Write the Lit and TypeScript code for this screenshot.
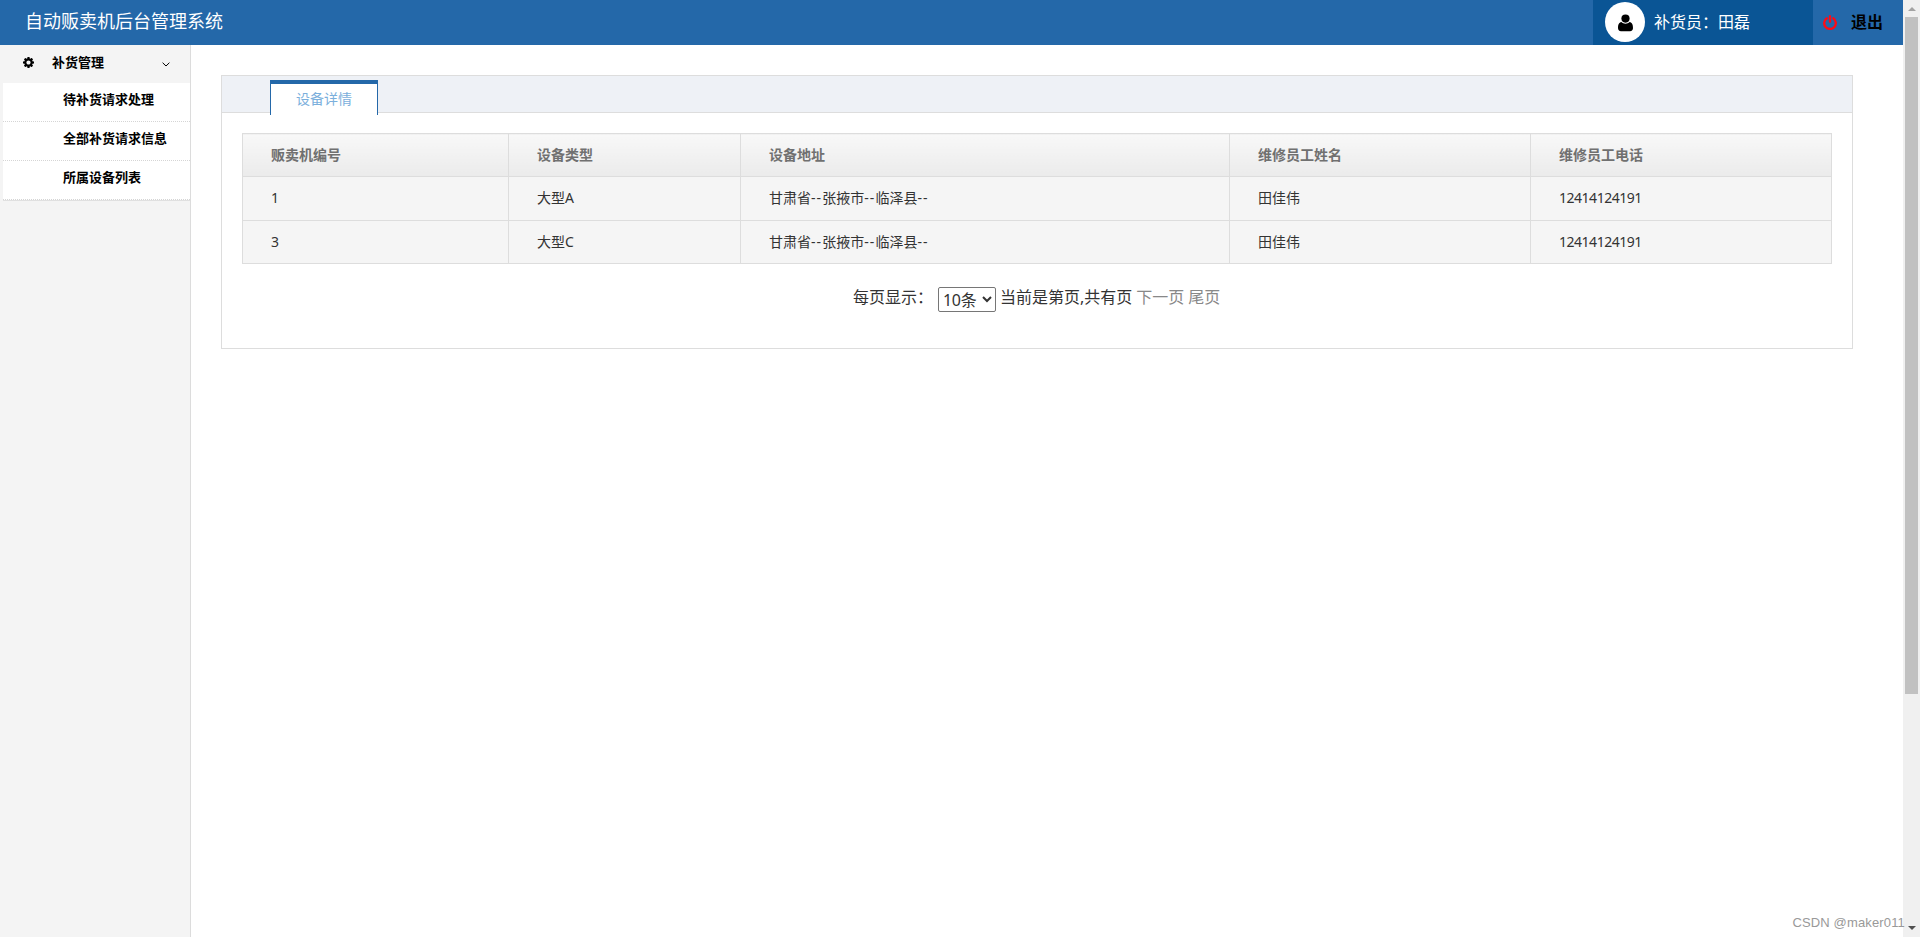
import { LitElement, html, css, svg } from "lit";
import { customElement, state } from "lit/decorators.js";

interface Device {
  id: string;
  type: string;
  address: string[];
  staff: string;
  phone: string;
}

const gear = svg`<svg class="gear" viewBox="0 0 1536 1536"><path fill="currentColor" d="M1060 768q0-121-85.500-206.500T768 476t-206.500 85.500T476 768t85.500 206.500T768 1060t206.500-85.500T1060 768zm476-109v222q0 12-8 23t-20 13l-185 28q-19 54-39 91 35 50 107 138 10 12 10 25t-9 23q-27 37-99 108t-94 71q-12 0-26-9l-138-108q-44 23-91 38-16 136-29 186-7 28-36 28H657q-14 0-24.500-8.500T621 1506l-28-184q-49-16-90-37l-141 107q-10 9-25 9-14 0-25-11-126-114-165-168-7-10-7-23 0-12 8-23 15-21 51-66.500t54-70.500q-27-50-41-99L29 913q-13-2-21-12.500T0 877V655q0-12 8-23t19-13l186-28q14-46 39-92-40-57-107-138-10-12-10-24 0-10 9-23 26-36 98.500-107.500T337 135q13 0 26 10l138 107q44-23 91-38 16-136 29-186 7-28 36-28h222q14 0 24.500 8.500T915 30l28 184q49 16 90 37l142-107q9-9 24-9 13 0 25 10 129 119 165 170 7 8 7 22 0 12-8 23-15 21-51 66.500t-54 70.500q26 50 41 98l183 28q13 2 21 12.500t8 23.500z"/></svg>`;
const user = svg`<svg class="user" viewBox="0 0 15 18"><circle cx="7.500" cy="4.600" r="4.100" fill="currentColor"/><path fill="currentColor" d="M3.400 8C.9 8.300 0 11 0 14c0 2 1.100 3.200 3 3.200h9c1.900 0 3-1.200 3-3.200 0-3-.9-5.700-3.400-6C10.500 9.100 9.100 9.700 7.500 9.700S4.500 9.100 3.400 8z"/></svg>`;
const power = svg`<svg class="power" viewBox="0 0 14 15"><path fill="none" stroke="currentColor" stroke-width="2.300" stroke-linecap="round" d="M3.800 3.300a5.800 5.800 0 1 0 6.400 0M7 1.200v5.600"/></svg>`;
const chevron = svg`<svg class="chevron" viewBox="0 0 8 5"><path fill="none" stroke="currentColor" stroke-width="1" d="M.6.7 4 4 7.400.7"/></svg>`;

@customElement("app-root")
export class AppRoot extends LitElement {
  @state() private menu = ["待补货请求处理", "全部补货请求信息", "所属设备列表"];
  @state() private columns = ["贩卖机编号", "设备类型", "设备地址", "维修员工姓名", "维修员工电话"];
  @state() private devices: Device[] = [
    { id: "1", type: "大型A", address: ["甘肃省", "张掖市", "临泽县"], staff: "田佳伟", phone: "12414124191" },
    { id: "3", type: "大型C", address: ["甘肃省", "张掖市", "临泽县"], staff: "田佳伟", phone: "12414124191" },
  ];

  static styles = css`
    :host {
      display: flex;
      position: relative;
      height: 937px;
      overflow: hidden;
      background: #fff;
      color: #333;
      font: 14px/20px "Noto Sans", "Noto Sans CJK SC", sans-serif;
    }
    * { box-sizing: border-box; }
    svg { display: block; flex: none; }
    .page { flex: 1; min-width: 0; display: flex; flex-direction: column; }
    header { height: 45px; display: flex; background: #2468a9; color: #fff; font-family: "Noto Sans CJK SC", sans-serif; }
    .title { flex: 1; padding-left: 25px; font-size: 18px; line-height: 40px; }
    .account { width: 220px; display: flex; background: #0a5595; padding: 2px 0 0 12px; font-size: 16px; line-height: 39px; }
    .avatar { width: 40px; height: 40px; margin-right: 9px; border-radius: 50%; background: #fff; color: #000; display: flex; justify-content: center; padding-top: 12px; }
    .user { width: 15px; height: 18px; }
    .logout { width: 90px; display: flex; padding-left: 10px; color: #000; font-size: 16px; font-weight: 700; line-height: 43px; }
    .power { width: 14px; height: 15px; margin: 15px 14px 0 0; color: #ff0a14; }
    .body { flex: 1; display: flex; }
    aside { width: 191px; background: #f4f4f4; border-right: 1px solid #dcdcdc; color: #000; font: 700 13px/20px "Noto Sans CJK SC", sans-serif; }
    .group { height: 38px; display: flex; align-items: center; padding: 0 20px 3px 23px; }
    .gear { width: 11px; height: 11px; margin-right: 18px; }
    .group-name { flex: 1; padding-bottom: 2px; }
    .chevron { width: 8px; height: 5px; margin-top: 3px; }
    .menu { margin: 0 0 0 3px; padding: 0; list-style: none; background: #fff; border-bottom: 1px solid #e0e0e0; }
    .menu li { height: 39px; padding: 6px 0 0 60px; border-bottom: 1px dotted #d5d5d5; }
    main { flex: 1; padding: 30px 50px 0 30px; }
    .card { height: 274px; border: 1px solid #ddd; }
    .tabs { height: 37px; padding: 4px 0 0 48px; background: #eef1f6; border-bottom: 1px solid #ddd; }
    .tab { width: 108px; height: 35px; background: #fff; border: 1px solid #2468a9; border-top-width: 4px; border-bottom: 0; color: #7bafdc; text-align: center; line-height: 29px; }
    table { width: 1590px; margin: 20px 0 0 20px; border-collapse: collapse; table-layout: fixed; }
    .c0 { width: 266px; } .c1 { width: 232px; } .c2 { width: 489px; } .c3 { width: 301px; } .c4 { width: 301px; }
    th, td { border: 1px solid #ddd; padding: 0 0 1px 28px; text-align: left; height: 43px; }
    tbody tr:first-child td { height: 44px; padding-bottom: 2px; }
    th { color: #707070; background: linear-gradient(#f8f8f8, #ebebeb); font-weight: 700; }
    td { background: #f5f5f5; }
    td.num { letter-spacing: -0.480px; }
    .dash { letter-spacing: 1.100px; }
    .pager { display: flex; margin-top: 21px; padding-left: 631px; font-size: 16px; line-height: 24px; white-space: nowrap; }
    .per { width: 85px; }
    select { width: 58px; height: 25px; margin: 2px 4px 0 0; padding: 0; border: 1px solid #767676; border-radius: 2px; background: #fff; color: #333; font: 16px/22px "Noto Sans", "Noto Sans CJK SC", sans-serif; letter-spacing: -0.300px; }
    .pager a { margin-left: 4px; color: #888; }
    .scroll { width: 17px; display: flex; flex-direction: column; align-items: center; background: #f0f0f0; }
    .up { height: 17px; padding-top: 7px; color: #a3a3a3; }
    .thumb { width: 13px; height: 677px; background: #c1c1c1; }
    .down { margin-top: auto; padding-bottom: 7px; color: #505050; }
    .arrow { width: 8px; height: 4px; }
    .mark { position: absolute; right: 15px; bottom: 4px; color: #999; font: 13px/20px "Liberation Sans", sans-serif; letter-spacing: 0.150px; }
  `;

  render() {
    return html`
      <div class="page">
        <header>
          <div class="title">自动贩卖机后台管理系统</div>
          <div class="account"><span class="avatar">${user}</span>补货员：田磊</div>
          <div class="logout">${power}退出</div>
        </header>
        <div class="body">
          <aside>
            <div class="group">${gear}<span class="group-name">补货管理</span>${chevron}</div>
            <ul class="menu">${this.menu.map((m) => html`<li>${m}</li>`)}</ul>
          </aside>
          <main>
            <section class="card">
              <div class="tabs"><div class="tab">设备详情</div></div>
              <table>
                <colgroup>${this.columns.map((_, i) => html`<col class="c${i}" />`)}</colgroup>
                <thead><tr>${this.columns.map((c) => html`<th>${c}</th>`)}</tr></thead>
                <tbody>
                  ${this.devices.map((d) => html`<tr>
                    <td>${d.id}</td>
                    <td>${d.type}</td>
                    <td>${d.address.map((a) => html`${a}<span class="dash">--</span>`)}</td>
                    <td>${d.staff}</td>
                    <td class="num">${d.phone}</td>
                  </tr>`)}
                </tbody>
              </table>
              <div class="pager">
                <span class="per">每页显示：</span>
                <select><option>10条</option></select>
                <span>当前是第页,共有页</span><a>下一页</a><a>尾页</a>
              </div>
            </section>
          </main>
        </div>
      </div>
      <div class="scroll">
        <div class="up"><svg class="arrow" viewBox="0 0 8 4"><path fill="currentColor" d="M0 4 4 0l4 4z" /></svg></div>
        <div class="thumb"></div>
        <div class="down"><svg class="arrow" viewBox="0 0 8 4"><path fill="currentColor" d="m0 0 4 4 4-4z" /></svg></div>
      </div>
      <div class="mark">CSDN @maker011</div>
    `;
  }
}
